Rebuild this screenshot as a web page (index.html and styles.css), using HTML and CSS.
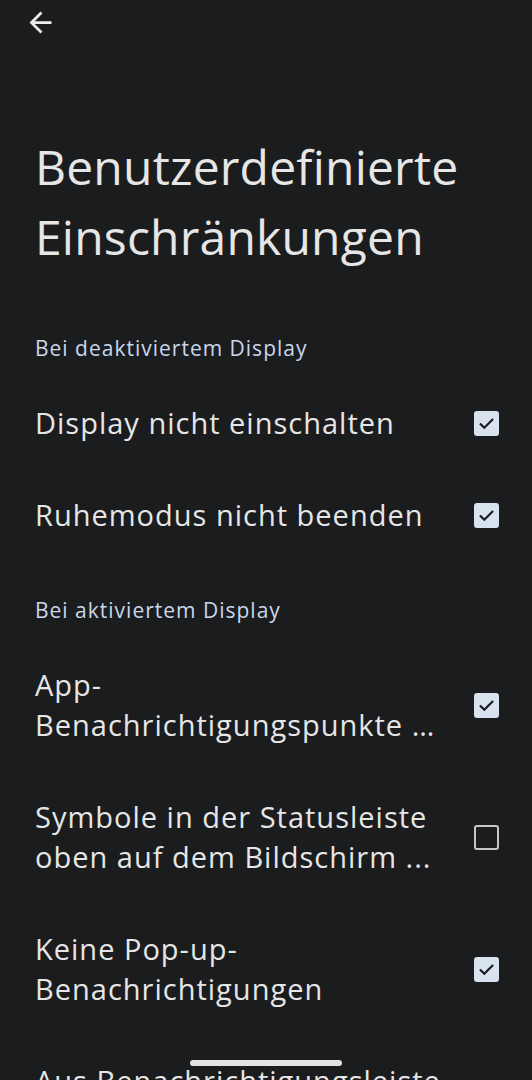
FILE: index.html
```
<html>
    <head>
        <link rel="stylesheet" href="styles.css">
    </head>
    <body>
        <div class="page">
            <div class="topbar">
                <svg class="back" viewBox="0 0 24 24" width="33" height="33">
                    <path d="M20 11H7.83l5.59-5.59L12 4l-8 8 8 8 1.41-1.41L7.83 13H20v-2z" fill="#ededed"/>
                </svg>
            </div>

            <h1 class="title">Benutzerdefinierte Einschränkungen</h1>

            <div class="section">Bei deaktiviertem Display</div>
            <div class="row">
                <div class="label">Display nicht einschalten</div>
                <div class="box checked"><svg viewBox="0 0 24 24" width="22" height="22"><path d="M4.5 12.5l5 5L19.5 7.5" fill="none" stroke="#1b1c1e" stroke-width="2.5"/></svg></div>
            </div>
            <div class="row">
                <div class="label">Ruhemodus nicht beenden</div>
                <div class="box checked"><svg viewBox="0 0 24 24" width="22" height="22"><path d="M4.5 12.5l5 5L19.5 7.5" fill="none" stroke="#1b1c1e" stroke-width="2.5"/></svg></div>
            </div>

            <div class="section">Bei aktiviertem Display</div>
            <div class="row">
                <div class="label">App-<br>Benachrichtigungspunkte …</div>
                <div class="box checked"><svg viewBox="0 0 24 24" width="22" height="22"><path d="M4.5 12.5l5 5L19.5 7.5" fill="none" stroke="#1b1c1e" stroke-width="2.5"/></svg></div>
            </div>
            <div class="row">
                <div class="label">Symbole in der Statusleiste<br>oben auf dem Bildschirm ...</div>
                <div class="box"></div>
            </div>
            <div class="row">
                <div class="label">Keine Pop-up-<br>Benachrichtigungen</div>
                <div class="box checked"><svg viewBox="0 0 24 24" width="22" height="22"><path d="M4.5 12.5l5 5L19.5 7.5" fill="none" stroke="#1b1c1e" stroke-width="2.5"/></svg></div>
            </div>
            <div class="row">
                <div class="label">Aus Benachrichtigungsleiste<br>ausblenden</div>
                <div class="box checked"></div>
            </div>
        </div>
        <div class="handle"></div>
    </body>
</html>
```

FILE: styles.css
```
body {
    margin: 0;
    background-color: #1b1c1e;
    color: #e6e6e6;
    font-family: "Open Sans", "Noto Sans", sans-serif;
    overflow: hidden;
    height: 1080px;
}
.page {
    padding: 0 32px 0 35px;
}
.topbar {
    height: 45px;
    margin-left: -11px;
    padding-top: 6px;
    box-sizing: border-box;
}
.back {
    display: block;
}
.title {
    margin: 87px 0 27px 0;
    font-size: 48px;
    font-weight: 400;
    line-height: 70px;
    width: 450px;
    letter-spacing: 0.2px;
}
.section {
    padding: 35px 0 15px 0;
    font-size: 21px;
    line-height: 28px;
    letter-spacing: 1px;
    color: #c9d7ea;
}
.row {
    display: flex;
    align-items: center;
    justify-content: space-between;
    padding: 26px 0;
}
.label {
    font-size: 29px;
    line-height: 40px;
    letter-spacing: 1px;
    white-space: nowrap;
}
.box {
    width: 21px;
    height: 21px;
    border: 2.5px solid #c6c6c6;
    border-radius: 3px;
    margin-right: 1px;
    display: flex;
    align-items: center;
    justify-content: center;
    flex-shrink: 0;
}
.box.checked {
    background-color: #d9e3f0;
    border-color: #d9e3f0;
}
.handle {
    position: absolute;
    left: 190px;
    top: 1060px;
    width: 152px;
    height: 6px;
    border-radius: 3px;
    background-color: #e3e3e3;
}
```
